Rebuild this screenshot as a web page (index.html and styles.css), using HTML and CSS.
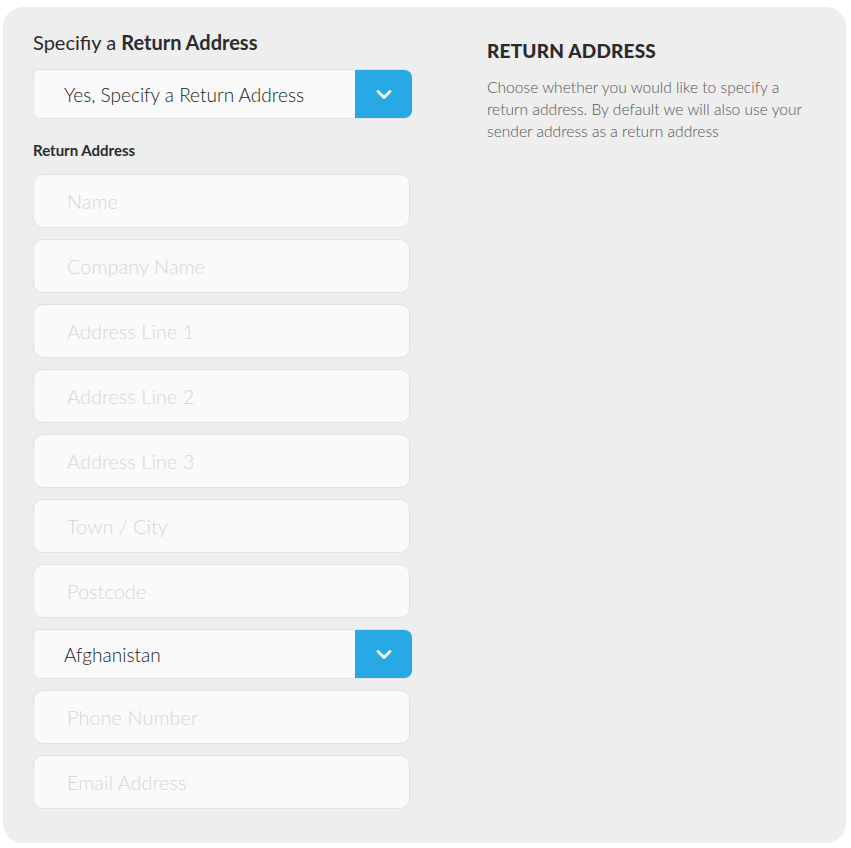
FILE: index.html
```html
<!DOCTYPE html>
<html lang="en">
<head>
<meta charset="utf-8">
<title>Return Address</title>
<link rel="stylesheet" href="styles.css">
</head>
<body>
<div class="card">
  <form class="form-col">
    <h2 class="title">Specifiy a <strong>Return Address</strong></h2>
    <div class="select-wrap">
      <select class="select"><option>Yes, Specify a Return Address</option></select>
      <span class="select-btn"><svg width="16" height="11" viewBox="0 0 16 11"><path d="M2 2.5 L8 8.5 L14 2.5" fill="none" stroke="#fff" stroke-width="2.8" stroke-linecap="round" stroke-linejoin="round"/></svg></span>
    </div>
    <label class="label">Return Address</label>
    <div class="fields">
      <input class="input" placeholder="Name">
      <input class="input" placeholder="Company Name">
      <input class="input" placeholder="Address Line 1">
      <input class="input" placeholder="Address Line 2">
      <input class="input" placeholder="Address Line 3">
      <input class="input" placeholder="Town / City">
      <input class="input" placeholder="Postcode">
      <div class="select-wrap country">
        <select class="select"><option>Afghanistan</option></select>
        <span class="select-btn"><svg width="16" height="11" viewBox="0 0 16 11"><path d="M2 2.5 L8 8.5 L14 2.5" fill="none" stroke="#fff" stroke-width="2.8" stroke-linecap="round" stroke-linejoin="round"/></svg></span>
      </div>
      <input class="input" placeholder="Phone Number">
      <input class="input" placeholder="Email Address">
    </div>
  </form>
  <aside class="help">
    <h3 class="help-title">RETURN ADDRESS</h3>
    <p class="help-text">Choose whether you would like to specify a return address. By default we will also use your sender address as a return address</p>
  </aside>
</div>
</body>
</html>
```

FILE: styles.css
```css
* { box-sizing: border-box; }
html, body { background: #fff; }
body {
  margin: 0;
  padding: 7px 5px 5px 3px;
  font-family: Lato, "Open Sans", sans-serif;
  font-weight: 300;
  color: #333;
}
.card {
  background: #eeeeee;
  border-radius: 20px;
  height: 836px;
  padding: 22px 30px 0 30px;
  display: flex;
  gap: 76px;
}
.form-col {
  width: 378px;
  display: flex;
  flex-direction: column;
}
.title {
  margin: 0;
  font-size: 20px;
  line-height: 26px;
  font-weight: 400;
  color: #2b2b2b;
}
.title strong { font-weight: 700; }
.select-wrap {
  margin-top: 14px;
  display: flex;
  height: 50px;
  width: 379px;
  background: #fafafa;
  border: 1px solid #e2e2e2;
  border-right: none;
  border-radius: 6px 8px 8px 6px;
  overflow: hidden;
}
.select {
  flex: 1;
  appearance: none;
  -webkit-appearance: none;
  border: none;
  background: transparent;
  font-family: inherit;
  font-weight: 300;
  font-size: 19px;
  color: #222;
  padding: 0 0 0 30px;
  outline: none;
}
.select-btn {
  width: 57px;
  margin: -1px 0;
  background: #29a8e6;
  display: flex;
  align-items: center;
  justify-content: center;
}
.label {
  margin-top: 21px;
  font-size: 15px;
  line-height: 20px;
  font-weight: 700;
  color: #2b2b2b;
}
.fields {
  margin-top: 14px;
  display: flex;
  flex-direction: column;
  gap: 11px;
}
.input {
  height: 54px;
  width: 377px;
  background: #fafafa;
  border: 1px solid #e2e2e2;
  border-radius: 10px;
  padding: 0 0 0 33px;
  font-family: inherit;
  font-weight: 300;
  font-size: 20px;
  color: #333;
  outline: none;
}
.input::placeholder { color: #dcd4d4; }
.country { margin-top: 0; }
.help { width: 330px; }
.help-title {
  margin: 10px 0 0;
  font-size: 19px;
  line-height: 24px;
  font-weight: 900;
  color: #2a2a2a;
  letter-spacing: 0.2px;
}
.help-text {
  margin: 13px 0 0;
  font-size: 15.6px;
  line-height: 22px;
  color: #555;
}
```
